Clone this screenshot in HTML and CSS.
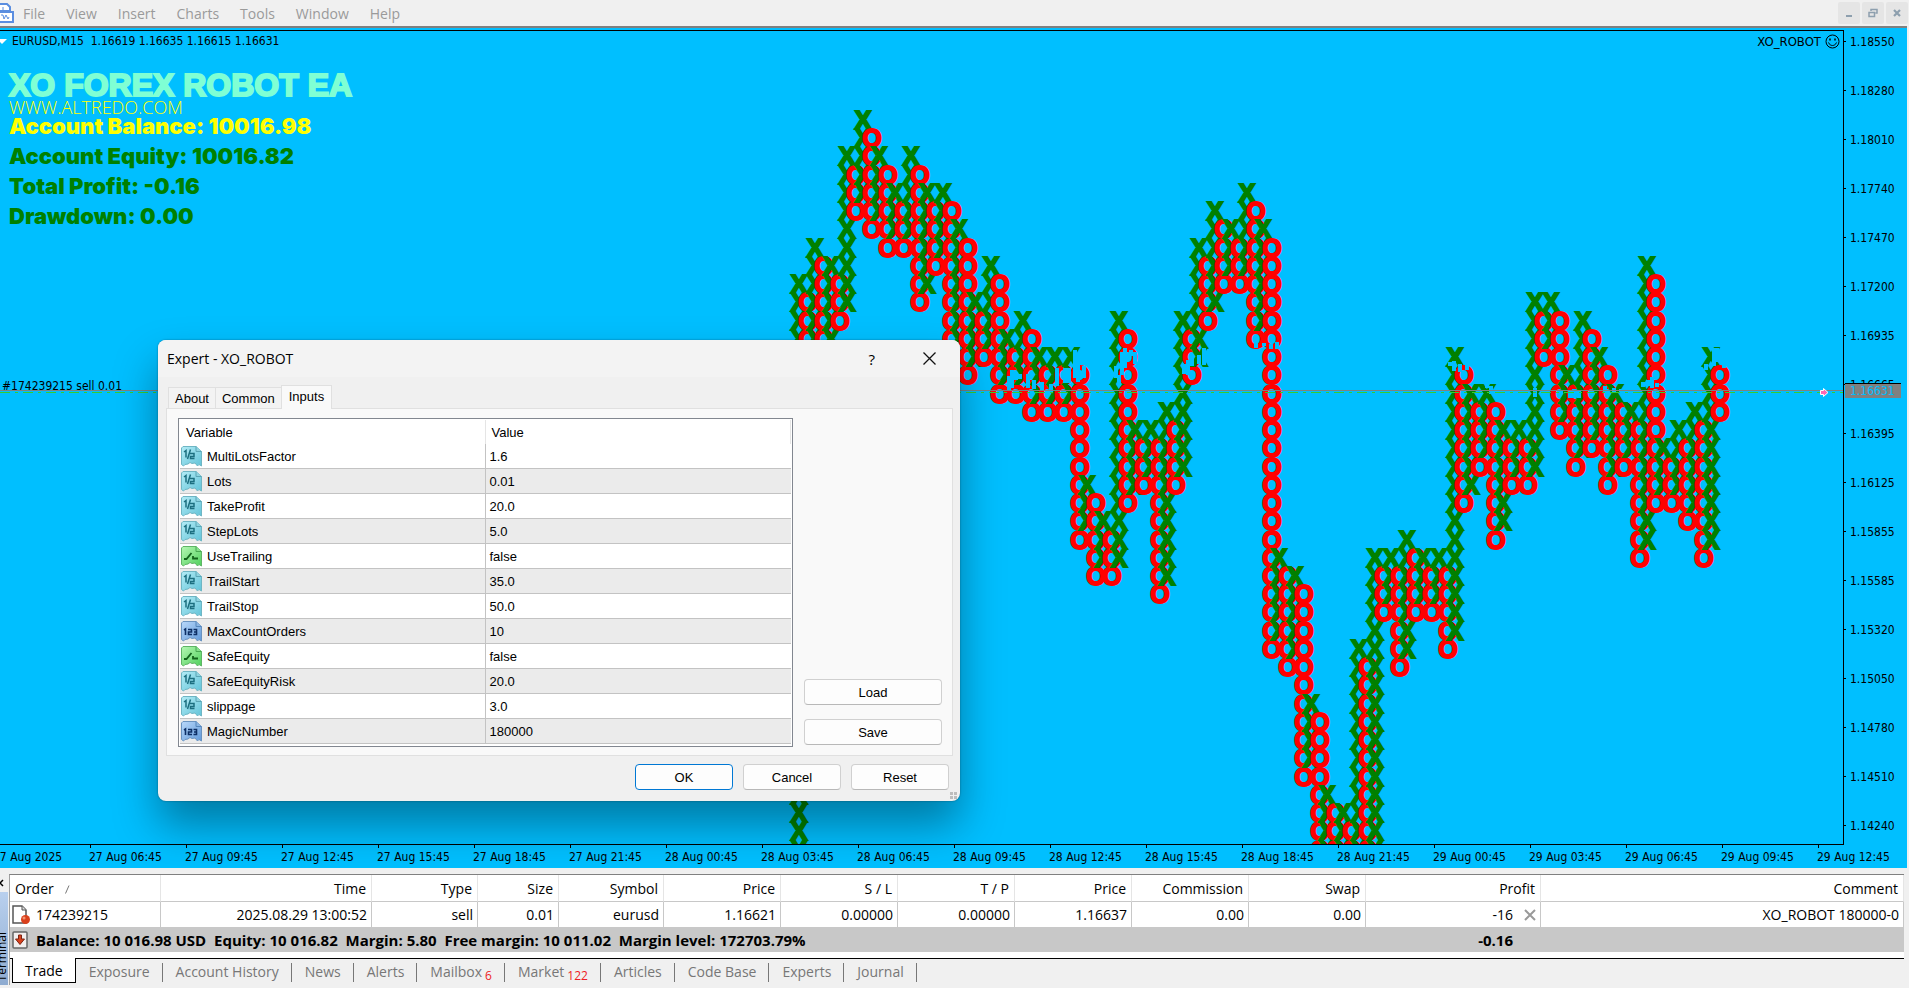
FILE: index.html
```html
<!DOCTYPE html>
<html lang="en">
<head>
<meta charset="utf-8">
<title>EURUSD,M15</title>
<link rel="stylesheet" href="styles.css">
</head>
<body>
<svg class="defs" width="0" height="0" aria-hidden="true">
  <defs>
    <linearGradient id="cyan" x1="0" y1="0" x2="1" y2="1"><stop offset="0" stop-color="#b4ecf6"/><stop offset="1" stop-color="#62c3d8"/></linearGradient>
    <linearGradient id="blue" x1="0" y1="0" x2="1" y2="1"><stop offset="0" stop-color="#b9d8fa"/><stop offset="1" stop-color="#629ada"/></linearGradient>
    <linearGradient id="green" x1="0" y1="0" x2="1" y2="1"><stop offset="0" stop-color="#b6f7b4"/><stop offset="1" stop-color="#4fd05c"/></linearGradient>
    <path id="sheet" d="M2 .5H15L20.500 5.500V20L18 18.500L16.500 20L14 17L11 17.500L9 16.500L7 18L4 18.500L2.500 20L.5 18.500V2Z"/>
    <symbol id="i-half" viewBox="0 0 21 21"><use href="#sheet" fill="url(#cyan)" stroke="#6fb6c4"/><path d="M15 .5V5.500H20.500" fill="#8fd3e0" stroke="#5aa5b5"/><path d="M3 6L5 4.500V11.500M9.500 3.500L6.500 13M9 7.500H13V10.500H9.500V12.500H13.500" fill="none" stroke="#1c6f80" stroke-width="1.500"/></symbol>
    <symbol id="i-int" viewBox="0 0 21 21"><use href="#sheet" fill="url(#blue)" stroke="#6a93c0"/><path d="M15 .5V5.500H20.500" fill="#8db6e4" stroke="#5586bb"/><path d="M3 9L4.500 8V14M7 8.500H10.500V11H7.500V13.500H11M12.500 8.500H15.500V13.500H12.500M13 11H15.500" fill="none" stroke="#0d2f66" stroke-width="1.600"/></symbol>
    <symbol id="i-bool" viewBox="0 0 21 21"><use href="#sheet" fill="url(#green)" stroke="#5fb566"/><path d="M15 .5V5.500H20.500" fill="#84e08a" stroke="#48a850"/><path d="M3 13H5.500L10.500 7M12 10V12.500H17" fill="none" stroke="#12631b" stroke-width="1.800"/></symbol>
  </defs>
</svg>

<header class="menubar">
  <svg class="app-icon" width="14" height="20" viewBox="0 0 14 20"><path d="M0 1H7L10 4V8H0" fill="#fff" stroke="#5b8ee0" stroke-width="2"/><path d="M0 9H13V19H0" fill="#fff" stroke="#5b8ee0" stroke-width="2"/><path d="M3 4V7M1 12L3 12L4 16L6 12L8 16L9 14" fill="none" stroke="#5b8ee0"/></svg>
  <nav class="menu">
    <button>File</button><button>View</button><button>Insert</button><button>Charts</button><button>Tools</button><button>Window</button><button>Help</button>
  </nav>
  <div class="mdi">
    <button aria-label="Minimize"><svg width="10" height="10" viewBox="0 0 10 10"><path d="M2 8H8" stroke="#8d9fae" stroke-width="2"/></svg></button>
    <button aria-label="Restore"><svg width="10" height="10" viewBox="0 0 10 10"><path d="M3 3V1.500H9V5H7.500M1 4.500H6.500V8.500H1Z" fill="none" stroke="#8d9fae" stroke-width="1.500"/></svg></button>
    <button aria-label="Close chart"><svg width="10" height="10" viewBox="0 0 10 10"><path d="M2 2L8 8M8 2L2 8" stroke="#8d9fae" stroke-width="2.200"/></svg></button>
  </div>
</header>

<main class="chart">
  <section class="plot">
    <svg class="marks" id="marks" aria-label="XO chart"></svg>
    <div class="overlay">
      <p class="quote"><svg width="7" height="5" viewBox="0 0 7 5"><path d="M-3 0H7L2 5Z" fill="#fff"/></svg><span>EURUSD,M15&nbsp; 1.16619 1.16635 1.16615 1.16631</span></p>
      <h1 class="robot">XO FOREX ROBOT EA</h1>
      <p class="site">WWW.ALTREDO.COM</p>
      <div class="stats">
        <p class="balance">Account Balance: 10016.98</p>
        <p>Account Equity: 10016.82</p>
        <p>Total Profit: -0.16</p>
        <p>Drawdown: 0.00</p>
      </div>
    </div>
    <p class="expert">XO_ROBOT
      <svg width="15" height="15" viewBox="0 0 15 15"><circle cx="7.500" cy="7.500" r="6.500" fill="none" stroke="#000"/><path d="M5 4.500V6.500M10 4.500V6.500" stroke="#000" stroke-width="1.500"/><path d="M3.500 8.500C5 12.500 10 12.500 11.500 8.500" fill="none" stroke="#000"/></svg>
    </p>
    <p class="position">#174239215 sell 0.01</p>
  </section>
  <ol class="prices">
    <li>1.18550</li><li>1.18280</li><li>1.18010</li><li>1.17740</li><li>1.17470</li><li>1.17200</li><li>1.16935</li><li>1.16665</li><li>1.16395</li><li>1.16125</li><li>1.15855</li><li>1.15585</li><li>1.15320</li><li>1.15050</li><li>1.14780</li><li>1.14510</li><li>1.14240</li>
  </ol>
  <span class="current">1.16631</span>
  <ol class="times">
    <li>27 Aug 2025</li><li>27 Aug 06:45</li><li>27 Aug 09:45</li><li>27 Aug 12:45</li><li>27 Aug 15:45</li><li>27 Aug 18:45</li><li>27 Aug 21:45</li><li>28 Aug 00:45</li><li>28 Aug 03:45</li><li>28 Aug 06:45</li><li>28 Aug 09:45</li><li>28 Aug 12:45</li><li>28 Aug 15:45</li><li>28 Aug 18:45</li><li>28 Aug 21:45</li><li>29 Aug 00:45</li><li>29 Aug 03:45</li><li>29 Aug 06:45</li><li>29 Aug 09:45</li><li>29 Aug 12:45</li>
  </ol>
</main>

<section class="terminal">
  <aside class="grip">
    <button class="grip-close" aria-label="Close terminal"><svg width="4" height="8" viewBox="0 0 4 8"><path d="M-3 1L3 7M3 1L-3 7" stroke="#000" stroke-width="1.500"/></svg></button>
    <div class="grip-bar"><span>Terminal</span></div>
  </aside>
  <div class="term-main">
    <table class="orders">
      <colgroup><col class="c-order"><col class="c-time"><col class="c-type"><col class="c-size"><col class="c-symbol"><col class="c-num"><col class="c-num"><col class="c-num"><col class="c-num"><col class="c-num"><col class="c-num"><col class="c-profit"><col></colgroup>
      <thead><tr><th>Order <svg class="sort" width="5" height="9" viewBox="0 0 5 9"><path d="M.5 8.500L4 .5" stroke="#777"/></svg></th><th>Time</th><th>Type</th><th>Size</th><th>Symbol</th><th>Price</th><th>S / L</th><th>T / P</th><th>Price</th><th>Commission</th><th>Swap</th><th>Profit</th><th>Comment</th></tr></thead>
      <tbody>
        <tr><td><span class="lead"><svg width="18" height="20" viewBox="0 0 18 20"><path d="M1 1H10L14 5V18H1Z" fill="#fff" stroke="#555" stroke-width="1.500"/><path d="M10 1V5H14" fill="#ddd" stroke="#555"/><circle cx="13.500" cy="14.500" r="4.500" fill="#d9401c"/><circle cx="12" cy="13" r="1.500" fill="#f4936f"/></svg>174239215</span></td><td>2025.08.29 13:00:52</td><td>sell</td><td>0.01</td><td>eurusd</td><td>1.16621</td><td>0.00000</td><td>0.00000</td><td>1.16637</td><td>0.00</td><td>0.00</td><td>-16<button class="close-order" aria-label="Close order"><svg width="12" height="12" viewBox="0 0 12 12"><path d="M1 1L11 11M11 1L1 11" stroke="#999" stroke-width="2"/></svg></button></td><td>XO_ROBOT 180000-0</td></tr>
        <tr class="total"><td colspan="11"><span class="lead"><svg width="18" height="18" viewBox="0 0 18 18"><rect x="1" y="1" width="14" height="16" rx="1" fill="#f2eeee" stroke="#666" stroke-width="1.500"/><path d="M6.500 4H9.500V8H12.500L8 13.500L3.500 8H6.500Z" fill="#d9401c" stroke="#7d2413"/></svg>Balance: 10 016.98 USD&nbsp; Equity: 10 016.82&nbsp; Margin: 5.80&nbsp; Free margin: 10 011.02&nbsp; Margin level: 172703.79%</span></td><td class="sum">-0.16</td><td></td></tr>
      </tbody>
    </table>
    <nav class="tabs">
      <button class="on">Trade</button><button>Exposure</button><button>Account History</button><button>News</button><button>Alerts</button><button>Mailbox<sub>6</sub></button><button>Market<sub>122</sub></button><button>Articles</button><button>Code Base</button><button>Experts</button><button>Journal</button>
    </nav>
  </div>
</section>

<section class="dialog" role="dialog" aria-labelledby="dlg-title">
  <header class="dlg-head">
    <h2 id="dlg-title">Expert - XO_ROBOT</h2>
    <button class="help" aria-label="Help">?</button>
    <button class="dlg-close" aria-label="Close"><svg width="13" height="13" viewBox="0 0 13 13"><path d="M.5 .5L12.500 12.500M12.500 .5L.5 12.500" stroke="#111" stroke-width="1.300"/></svg></button>
  </header>
  <div class="dlg-tabs"><button>About</button><button>Common</button><button class="on">Inputs</button></div>
  <div class="panel">
    <div class="list">
      <table class="inputs">
        <thead><tr><th>Variable</th><th>Value</th></tr></thead>
        <tbody>
          <tr><td><span><svg><use href="#i-half"/></svg>MultiLotsFactor</span></td><td>1.6</td></tr>
          <tr><td><span><svg><use href="#i-half"/></svg>Lots</span></td><td>0.01</td></tr>
          <tr><td><span><svg><use href="#i-half"/></svg>TakeProfit</span></td><td>20.0</td></tr>
          <tr><td><span><svg><use href="#i-half"/></svg>StepLots</span></td><td>5.0</td></tr>
          <tr><td><span><svg><use href="#i-bool"/></svg>UseTrailing</span></td><td>false</td></tr>
          <tr><td><span><svg><use href="#i-half"/></svg>TrailStart</span></td><td>35.0</td></tr>
          <tr><td><span><svg><use href="#i-half"/></svg>TrailStop</span></td><td>50.0</td></tr>
          <tr><td><span><svg><use href="#i-int"/></svg>MaxCountOrders</span></td><td>10</td></tr>
          <tr><td><span><svg><use href="#i-bool"/></svg>SafeEquity</span></td><td>false</td></tr>
          <tr><td><span><svg><use href="#i-half"/></svg>SafeEquityRisk</span></td><td>20.0</td></tr>
          <tr><td><span><svg><use href="#i-half"/></svg>slippage</span></td><td>3.0</td></tr>
          <tr><td><span><svg><use href="#i-int"/></svg>MagicNumber</span></td><td>180000</td></tr>
        </tbody>
      </table>
    </div>
    <div class="side"><button class="btn">Load</button><button class="btn">Save</button></div>
  </div>
  <footer class="dlg-foot"><button class="btn primary">OK</button><button class="btn">Cancel</button><button class="btn">Reset</button></footer>
  <svg class="sizer" width="7" height="7" viewBox="0 0 7 7"><path d="M0 0H3V3H0ZM4 0H7V3H4ZM0 4H3V7H0ZM4 4H7V7H4Z" fill="#bdbdbd"/></svg>
</section>
<script src="script.js"></script>
</body>
</html>
```
FILE: styles.css
```css
* { box-sizing: border-box; }
body { margin: 0; height: 100vh; display: flex; flex-direction: column; overflow: hidden; background: #f0f0f0; color: #000; font-family: "Open Sans", "Noto Sans", sans-serif; font-size: 14px; }
button { font: inherit; color: inherit; background: none; border: 0; padding: 0; }
p, h1, h2, ol { margin: 0; padding: 0; list-style: none; }
h2 { font-weight: normal; }
svg { display: block; flex: none; }
.defs { position: absolute; }

.menubar { display: flex; align-items: center; height: 26px; flex: none; background: #f0f0f0; }
.menu { display: flex; gap: 21px; margin-left: 9px; padding-top: 2px; flex: 1; color: #9a9a9a; font-size: 14px; line-height: 24px; }
.mdi { display: flex; gap: 2px; padding-right: 1px; }
.mdi button { display: grid; place-items: center; width: 22px; height: 22px; background: #e5e5e5; border-radius: 2px; }

.chart { position: relative; flex: 1; min-height: 0; display: grid; grid-template-columns: 1fr 63px; grid-template-rows: minmax(0, 1fr) 23px; margin-right: 2px; padding-top: 2px; background: #00bfff; border-top: 2px solid #808080; font-family: "DejaVu Sans Condensed", "Noto Sans", sans-serif; font-size: 12px; overflow: hidden; }
.plot { position: relative; border-top: 1px solid #000; border-right: 1px solid #000; border-bottom: 1px solid #000; overflow: hidden; }
.marks { position: absolute; inset: 0; width: 100%; height: 100%; }
.mark { font: bold 25px "Liberation Sans", sans-serif; text-anchor: middle; stroke-width: 2px; }
.mark-x { fill: #008000; stroke: #008000; }
.mark-o { fill: #f00; stroke: #f00; }
.overlay { position: absolute; left: 0; top: 0; }
.quote { display: flex; align-items: center; gap: 5px; line-height: 20px; }
.robot { margin: 11px 0 0 9px; font: bold 32px/46px "Liberation Sans", sans-serif; color: #7fffd4; -webkit-text-stroke: 2px #7fffd4; }
.site { margin: -12px 0 0 9px; position: relative; font: 300 18px/22px "Open Sans", sans-serif; color: #ff0; }
.stats { margin: -7px 0 0 9px; font: 900 22px/30px "Inter", sans-serif; color: #008000; }
.balance { color: #ff0; }
.expert { position: absolute; top: 3px; right: 3px; display: flex; align-items: center; gap: 4px; font-size: 13px; }
.position { position: absolute; left: 2px; top: 348px; }
.prices { margin-top: -13px; }
.prices li { display: flex; align-items: center; gap: 4px; height: 49px; }
.prices li::before { content: ""; width: 2px; height: 1px; background: #000; }
.current { position: absolute; top: 355px; right: 6px; width: 56px; height: 15px; padding-left: 5px; line-height: 15px; background: #808080; border-top: 1px solid #000; color: #00bfff; }
.times { grid-column: 1 / -1; display: flex; margin-left: -7px; line-height: 18px; }
.times li { flex: none; width: 96px; white-space: nowrap; }
.times li::before { content: ""; display: block; width: 1px; height: 3px; margin-left: 1px; background: #000; }

.terminal { display: flex; flex: none; padding: 6px 5px 3px 0; }
.grip { width: 9px; overflow: hidden; display: flex; flex-direction: column; }
.grip-close { height: 18px; }
.grip-bar { flex: 1; width: 8px; background: linear-gradient(#b9d0ee, #8eabd0); display: flex; align-items: flex-end; justify-content: center; padding-bottom: 4px; }
.grip-bar span { writing-mode: vertical-rl; transform: rotate(180deg); font-size: 12px; line-height: 16px; margin-left: -4px; }
.term-main { flex: 1; min-width: 0; background: #fff; border-top: 1px solid #808080; border-left: 1px solid #a0a0a0; }
.orders { width: 100%; table-layout: fixed; border-collapse: separate; border-spacing: 0; }
.c-order { width: 151px; } .c-time { width: 211px; } .c-type { width: 106px; } .c-size { width: 81px; } .c-symbol { width: 105px; } .c-num { width: 117px; } .c-profit { width: 175px; }
.orders th, .orders td { padding: 0 4px; text-align: right; font-weight: normal; white-space: nowrap; border-right: 1px solid #c8c8c8; }
.orders th { height: 27px; padding: 0 5px; border-bottom: 1px solid #c8c8c8; border-right-color: #e5e5e5; }
.orders td { height: 25px; }
.orders th:first-child, .orders td:first-child { text-align: left; }
.orders td:first-child { padding-left: 2px; }
.orders .total td { background: #c8c8c8; font-weight: bold; font-size: 15px; line-height: 20px; border: 0; }
.orders .total .sum { padding-right: 28px; }
.sort { display: inline-block; margin-left: 8px; }
.lead { display: flex; align-items: center; gap: 6px; }
.close-order { display: inline-block; margin-left: 11px; vertical-align: -1px; }
.tabs { display: flex; height: 27px; margin-top: 6px; padding-left: 2px; background: #f0f0f0; border-top: 1px solid #000; color: #777; line-height: 24px; }
.tabs button { position: relative; padding: 0 13px; height: 25px; white-space: nowrap; }
.tabs button:not(.on)::after { content: ""; position: absolute; right: 0; top: 4px; height: 19px; border-right: 1px solid #777; }
.tabs .on { margin-top: -1px; padding: 1px 12px 0; background: #fff; color: #000; border: 1px solid #000; border-top: 0; }
.tabs sub { margin-left: 3px; color: #ee1c25; font-size: 12px; line-height: 0; }

.dialog { position: absolute; left: 158px; top: 340px; width: 802px; padding-bottom: 11px; background: #f0f0f0; border-radius: 8px; box-shadow: 0 0 2px rgba(0,0,0,.4), 0 24px 44px rgba(0,0,0,.36); font-family: "Liberation Sans", sans-serif; font-size: 13px; }
.dlg-head { display: flex; align-items: center; height: 37px; padding: 0 24px 0 9px; background: #f3f3f3; border-radius: 8px 8px 0 0; font-family: "Open Sans", sans-serif; }
.dlg-head h2 { flex: 1; font-size: 14px; }
.help { font-size: 15px; margin-right: 48px; }
.dlg-tabs { display: flex; align-items: flex-end; height: 32px; padding: 0 10px; margin-bottom: -1px; position: relative; }
.dlg-tabs button { height: 22px; padding: 0 6px; border: 1px solid #e0e0e0; border-right: 0; background: #f3f3f3; }
.dlg-tabs .on { height: 24px; padding: 0 7px 3px; background: #f9f9f9; border-right: 1px solid #e0e0e0; border-bottom: 0; }
.panel { display: flex; gap: 11px; margin: 0 7px 0 8px; padding: 9px 10px 8px 11px; background: #f9f9f9; border: 1px solid #e0e0e0; }
.list { flex: 1; padding: 1px 1px 2px; background: #fff; border: 1px solid #828790; }
.inputs { width: 100%; table-layout: fixed; border-collapse: separate; border-spacing: 0; }
.inputs th, .inputs td { height: 25px; padding: 0 4px; text-align: left; font-weight: normal; }
.inputs th { height: 24px; padding: 0 6px; border-right: 1px solid #e5e5e5; }
.inputs td { border-bottom: 1px solid #c3c3c3; }
.inputs td:first-child { padding-left: 1px; border-right: 1px solid #c3c3c3; }
.inputs tr:nth-child(even) td { background: #ebebeb; }
.inputs td span { display: flex; align-items: center; gap: 5px; }
.inputs svg { width: 21px; height: 21px; }
.side { width: 138px; display: flex; flex-direction: column; justify-content: flex-end; gap: 14px; padding-bottom: 2px; }
.btn { height: 26px; background: #fdfdfd; border: 1px solid #d0d0d0; border-bottom-color: #b8b8b8; border-radius: 4px; }
.dlg-foot { display: flex; justify-content: flex-end; gap: 10px; padding: 8px 11px 0; }
.dlg-foot .btn { width: 98px; }
.btn.primary { border-color: #0078d4; }
.sizer { position: absolute; right: 3px; bottom: 2px; }
```
FILE: script.js
```js
const svg = document.getElementById("marks");
const NS = "http://www.w3.org/2000/svg";

// [first row, last row] of each X column, then of the O column to its right
const columns = [
  [9,40,10,13],[7,12,8,13],[8,12,9,11],[2,10,3,5],[0,4,1,6],[2,5,3,7],[4,6,5,7],[2,6,3,10],[4,9,5,8],[4,7,5,13],
  [6,12,7,14],[10,13,11,13],[8,12,9,15],[12,14,13,15],[11,14,12,16],[13,15,14,16],[13,15,14,16],[13,15,14,23],[20,22,21,25],[22,24,23,25],
  [11,24,12,21],[17,20,18,20],[17,19,18,26],[16,25,17,20],[11,19,12,14],[7,13,8,11],[5,10,6,9],[6,8,7,9],[4,8,5,12],[6,11,7,29],
  [24,28,25,30],[25,29,26,36],[32,35,33,40],[37,40,38,40],[38,40,39,40],[29,40,30,40],[24,40,25,27],[24,26,25,30],[23,29,24,27],[24,26,25,27],
  [24,26,25,29],[13,28,14,21],[15,20,16,19],[15,18,16,23],[17,22,18,20],[17,19,18,20],[10,19,11,13],[10,12,11,17],[14,16,15,19],[11,18,12,18],
  [13,17,14,20],[15,19,16,19],[16,18,17,24],[8,23,9,21],[18,20,19,21],[17,20,18,22],[16,21,17,24],[13,23,14,16]
];
const TOP = 98, ROW = 18.24, FIRST = 799, STEP = 16;

function add(tag, attrs, text) {
  const el = document.createElementNS(NS, tag);
  for (const name in attrs) el.setAttribute(name, attrs[name]);
  if (text) el.textContent = text;
  svg.appendChild(el);
}
function run(letter, x, from, to) {
  for (let r = from; r <= to; r++) {
    add("text", { class: "mark mark-" + letter.toLowerCase(), x, y: Math.round(TOP + r * ROW) }, letter);
  }
}
columns.forEach(([x1, x2, o1, o2], i) => {
  run("X", FIRST + STEP * i, x1, x2);
  run("O", FIRST + 9 + STEP * i, o1, o2);
});

// price bars: x, top, bottom in window coordinates
const bars = [
  [1008,376,390],[1011,370,388],[1015,372,380],[1019,374,379],[1027,374,388],[1033,380,389],[1041,382,390],[1050,384,392],[1056,368,386],[1064,368,383],[1068,368,383],
  [1074,350,378],[1077,357,382],[1083,366,378],[1115,366,378],[1118,375,386],[1121,352,375],[1124,348,368],[1130,350,356],[1134,352,364],[1183,364,374],[1187,360,375],
  [1191,356,366],[1198,355,364],[1203,348,365],[1255,343,348],[1263,343,346],[1270,344,349],[1276,342,349],
  [1449,362,366],[1453,361,371],[1459,364,372],[1466,365,370],[1486,384,388],[1490,386,394],[1534,388,397],[1560,390,394],[1569,390,398],[1573,389,398],[1578,390,398],
  [1604,386,392],[1613,388,392],[1620,389,392],[1642,382,387],[1647,380,386],[1651,377,388],[1656,383,387],[1662,383,386],[1705,364,370],[1713,348,366],[1716,348,362],[1723,364,368]
];
for (const [x, y1, y2] of bars) add("rect", { x: x - 1, y: y1 - 31, width: 4, height: y2 - y1, fill: "#00bfff" });

add("path", { d: "M0 361.500H1843", stroke: "#32cd32", "stroke-dasharray": "10 5 3 5" });
add("path", { d: "M0 359.500H1843", stroke: "#808080" });
add("path", { d: "M1820.500 359.500H1823.500V357.500L1828 361.500L1823.500 365.500V363.500H1820.500Z", fill: "#ff69b4", stroke: "#fff" });
```
